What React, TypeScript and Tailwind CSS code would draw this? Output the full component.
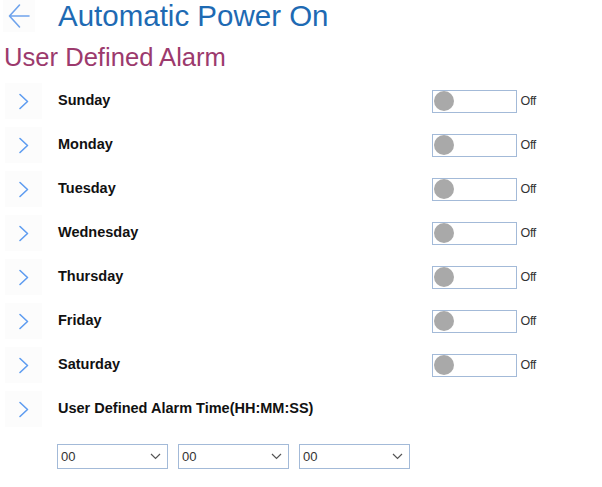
import React from "react";

const days = ["Sunday", "Monday", "Tuesday", "Wednesday", "Thursday", "Friday", "Saturday"];

function Chevron() {
  return (
    <div className="ml-[5px] flex h-[36px] w-[37px] shrink-0 items-center justify-center bg-[#fcfcfc]">
      <svg width="12" height="17" viewBox="0 0 12 17" fill="none">
        <path d="M2 1.5 L9.5 8.5 L2 15.5" stroke="#5e9cf0" strokeWidth="1.6" strokeLinecap="round" strokeLinejoin="round" />
      </svg>
    </div>
  );
}

function Toggle() {
  return (
    <div className="flex items-center">
      <div className="flex h-[23px] w-[85px] items-center border-[1.5px] border-[#a3bad8] bg-white pl-[1px]">
        <div className="h-[20px] w-[20px] rounded-full bg-[#a9a9a9]" />
      </div>
      <span className="ml-[3px] text-[12.5px] tracking-[-0.3px] text-[#333]">Off</span>
    </div>
  );
}

function Select() {
  return (
    <div className="flex h-[25px] w-[111px] items-center justify-between border-[1.5px] border-[#a3bad8] bg-white pl-[3px] pr-[6px]">
      <span className="text-[13px] text-[#333]">00</span>
      <svg width="11" height="7" viewBox="0 0 11 7" fill="none">
        <path d="M1 1 L5.5 5.5 L10 1" stroke="#555" strokeWidth="1.2" />
      </svg>
    </div>
  );
}

export default function App() {
  return (
    <div className="min-h-[487px] w-[602px] bg-white font-['Liberation_Sans',Arial,sans-serif]">
      <div className="flex h-[32px] items-center">
        <div className="ml-[3px] flex h-[32px] w-[32px] items-center justify-center bg-[#fcfcfc]">
          <svg width="22" height="26" viewBox="0 0 22 26" fill="none">
            <path d="M21 13 H2 M11.5 2 L1.5 13 L11.5 24" stroke="#6fa3ec" strokeWidth="1.6" strokeLinecap="round" strokeLinejoin="round" />
          </svg>
        </div>
        <h1 className="ml-[23px] text-[29.5px] leading-none text-[#1e6ab3]">Automatic Power On</h1>
      </div>
      <h2 className="ml-[4px] mt-[12px] text-[25.6px] leading-[26px] text-[#9c3a6d]">User Defined Alarm</h2>
      <div className="mt-[9px] flex flex-col">
        {days.map((d) => (
          <div key={d} className="flex h-[44px] items-center">
            <Chevron />
            <span className="ml-[16px] flex-1 text-[14.5px] font-bold text-[#111]">{d}</span>
            <div className="mr-[66px]">
              <Toggle />
            </div>
          </div>
        ))}
        <div className="flex h-[44px] items-center">
          <Chevron />
          <span className="ml-[16px] text-[14.5px] font-bold text-[#111]">User Defined Alarm Time(HH:MM:SS)</span>
        </div>
      </div>
      <div className="ml-[57px] mt-[13px] flex gap-[10px]">
        <Select />
        <Select />
        <Select />
      </div>
    </div>
  );
}
